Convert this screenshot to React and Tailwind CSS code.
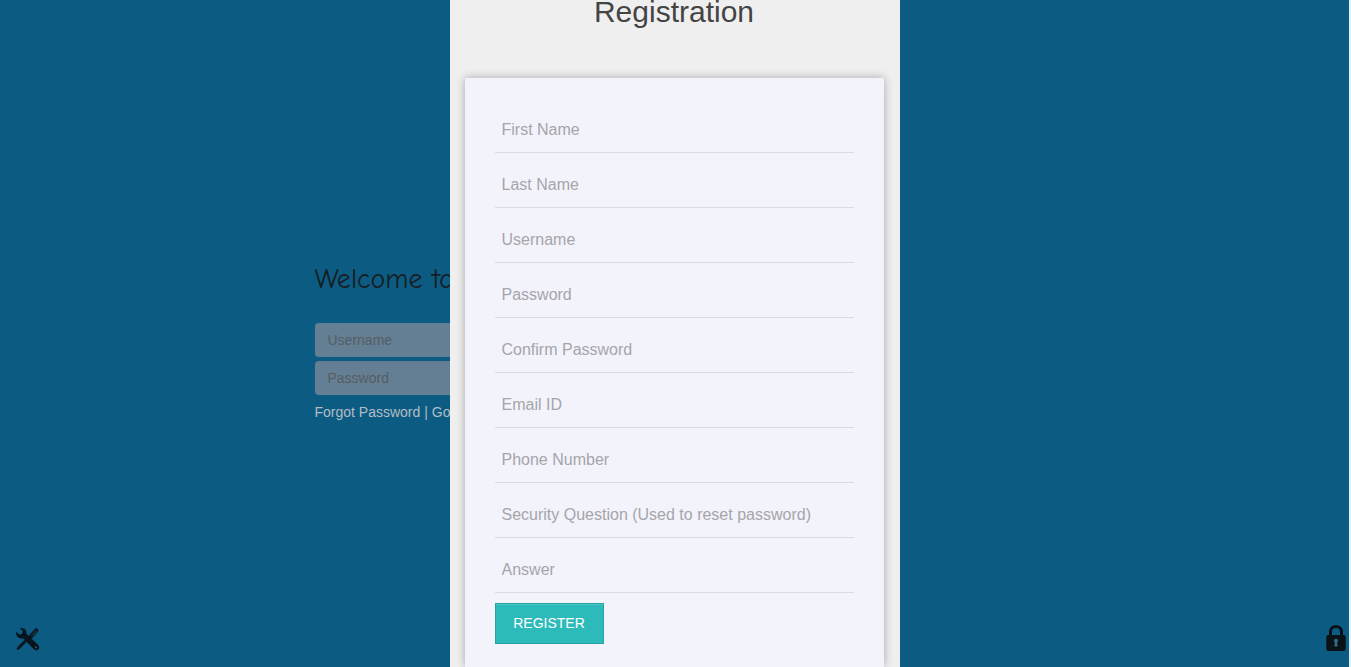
const fields = [
  { id: 'first-name', label: 'First Name', type: 'text' },
  { id: 'last-name', label: 'Last Name', type: 'text' },
  { id: 'username', label: 'Username', type: 'text' },
  { id: 'password', label: 'Password', type: 'password' },
  { id: 'confirm-password', label: 'Confirm Password', type: 'password' },
  { id: 'email', label: 'Email ID', type: 'email' },
  { id: 'phone', label: 'Phone Number', type: 'tel' },
  { id: 'question', label: 'Security Question (Used to reset password)', type: 'text' },
  { id: 'answer', label: 'Answer', type: 'text' },
];

function ToolsIcon() {
  return (
    <svg viewBox="0 0 24 24" className="h-6 w-6" aria-hidden="true">
      <path d="M0.500 22 2 19.500 8.500 13l2 2L4 21.500 1.500 23z" fill="#06141d" />
      <path d="M11.500 11 14 7.200 19.500 1.300c1.500-.4 3.200 1.200 3 3L17 10.500 13 13z" fill="#06141d" />
      <path d="m15 8.700 5.500-5.900M16.500 9.700 21.700 4.200" stroke="#2d5468" strokeWidth="0.700" />
      <path
        d="M4 1.200C6.500.6 9.400 1.800 10.200 4.200c.3 1 .3 1.800.1 2.600L22 17.700c1.600 1.500 1.500 3.500.3 4.700s-3.200 1.200-4.700-.3L7 11.200c-2 .5-4 .1-5.500-1.400C.2 8.500 0 6.300.4 4.700L3.200 7.500l2.800-.6.800-2.700z"
        fill="#06141d"
      />
      <circle cx="20" cy="20.200" r="1" fill="#38586a" />
    </svg>
  );
}

function LockIcon() {
  return (
    <svg viewBox="0 0 20 26" className="h-[26px] w-5" aria-hidden="true">
      <path d="M4.500 13V6.500a5.500 5 0 0 1 11 0V13" fill="none" stroke="#0a1218" strokeWidth="3" />
      <rect x="0.300" y="10" width="19.400" height="16" rx="2" fill="#0a1218" />
      <circle cx="10" cy="15.800" r="2.100" fill="#356983" />
      <path d="M9 16h2l.7 5.500H8.300z" fill="#356983" />
    </svg>
  );
}

function LoginInput({ id, label, type }) {
  return (
    <input
      id={id}
      type={type}
      placeholder={label}
      aria-label={label}
      className="h-[34px] w-full rounded bg-[#647f93] px-[13px] text-sm placeholder:text-[#555d64] placeholder:opacity-100"
    />
  );
}

export default function App() {
  return (
    <div className="relative flex h-screen flex-col overflow-hidden border-r-2 border-[#e4f3fa] bg-[#0b5b82] font-['Liberation_Sans',Arial,sans-serif]">
      <main className="mx-auto flex w-full max-w-[720px] flex-1 flex-col items-start pt-[260px]">
        <h1 className="font-['Comic_Sans_MS','Comic_Neue','Noto_Sans',sans-serif] text-[28px] leading-[38px] text-[#171d22]">
          Welcome to
        </h1>
        <form className="mt-[25px] flex w-[300px] flex-col gap-1">
          <LoginInput id="login-username" label="Username" type="text" />
          <LoginInput id="login-password" label="Password" type="password" />
        </form>
        <p className="mt-[7px] text-sm text-[#b5bdc3]">
          <a href="#forgot">Forgot Password</a> | <a href="#google">Google</a>
        </p>
      </main>
      <footer className="flex items-end justify-between pb-4 pl-4 pr-[3px]">
        <a href="#tools" aria-label="Tools"><ToolsIcon /></a>
        <a href="#lock" aria-label="Admin"><LockIcon /></a>
      </footer>

      <div className="absolute inset-0 flex justify-center overflow-hidden">
        <section
          role="dialog"
          aria-labelledby="registration-title"
          className="flex w-full max-w-[450px] flex-col bg-[#efefef] pl-[15px] pr-4"
        >
          <h2 id="registration-title" className="text-center text-[30px] leading-6 text-[#444]">
            Registration
          </h2>
          <form className="mt-[54px] flex flex-1 flex-col items-start gap-[10px] rounded-t-xs bg-[#f3f3fc] px-[30px] pt-[30px] shadow-[0_0_10px_rgba(0,0,0,0.3)]">
            {fields.map((f) => (
              <input
                key={f.id}
                id={f.id}
                type={f.type}
                placeholder={f.label}
                aria-label={f.label}
                className="h-[45px] w-full shrink-0 border-b border-[#dadae0] bg-transparent px-[7px] text-base placeholder:text-[#a5a5aa] placeholder:opacity-100"
              />
            ))}
            <button
              type="button"
              className="h-[41px] w-[109px] shrink-0 border border-[#27a3a3] bg-[#2dbaba] pb-[2px] text-sm text-white shadow-[inset_0_1px_0_#4ac6c6]"
            >
              REGISTER
            </button>
          </form>
        </section>
      </div>
    </div>
  );
}
